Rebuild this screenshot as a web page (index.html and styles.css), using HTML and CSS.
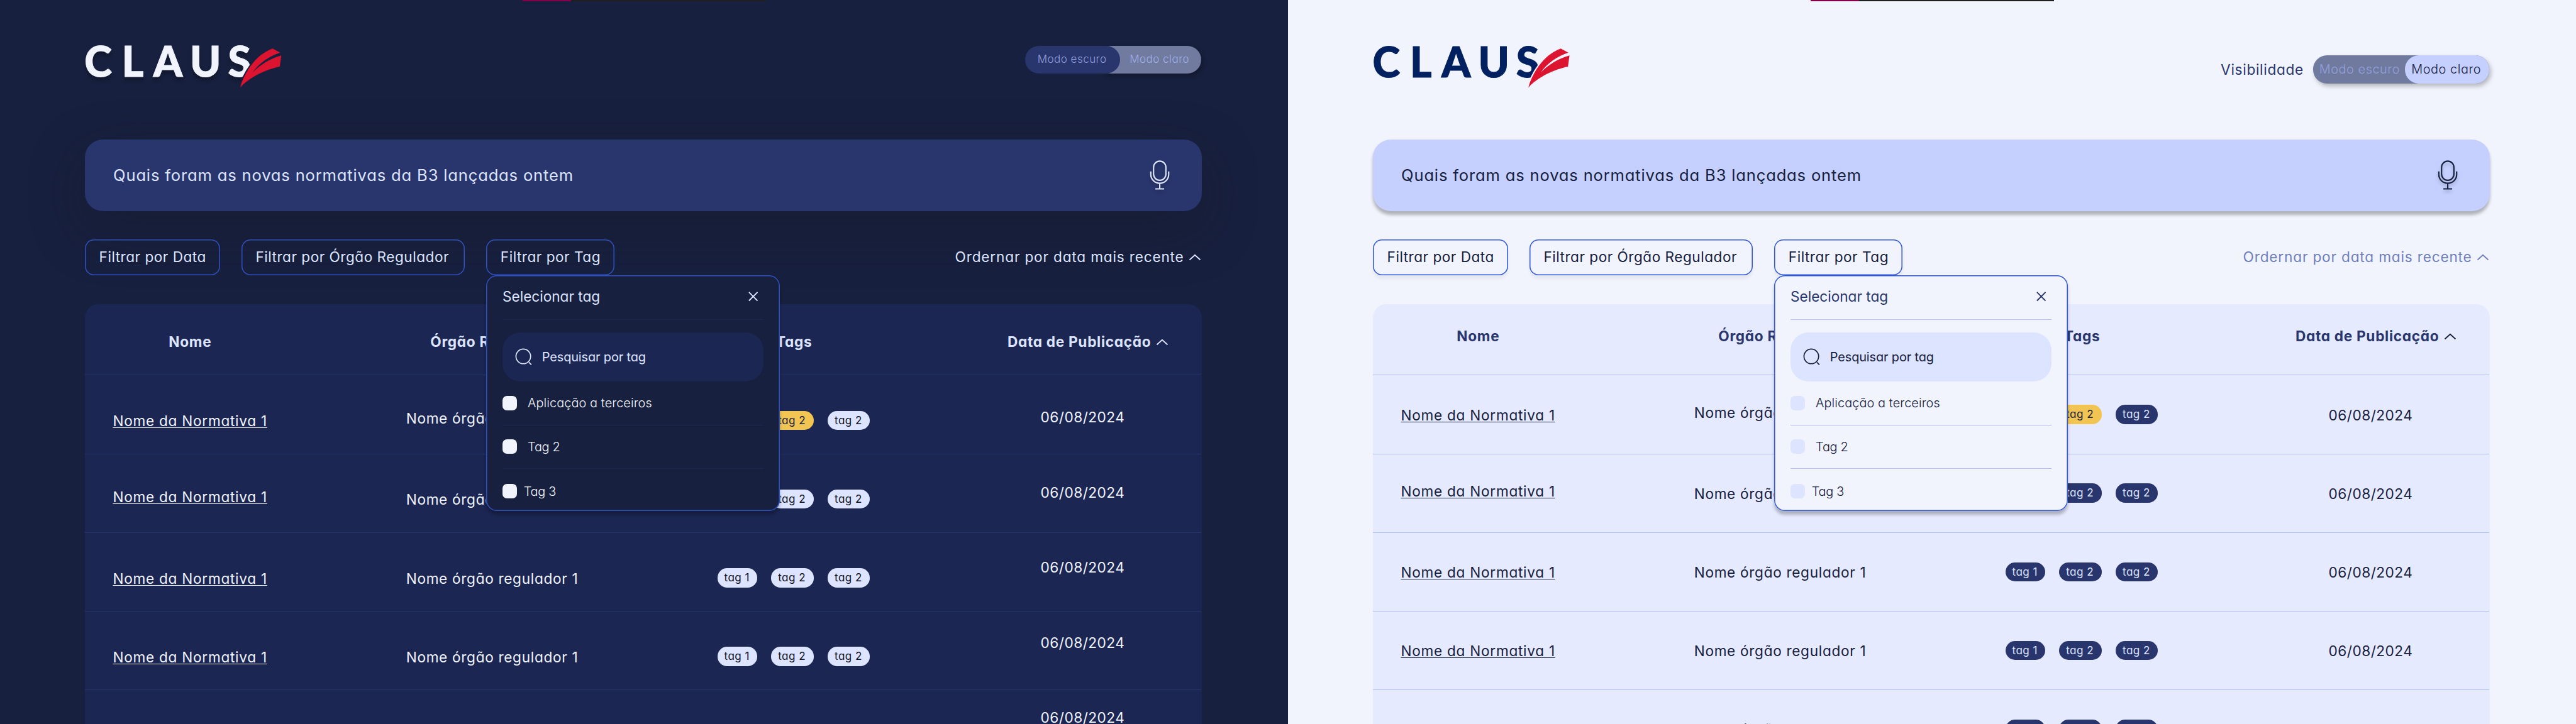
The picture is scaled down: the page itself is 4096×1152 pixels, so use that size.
FILE: index.html
```html
<!DOCTYPE html>
<html lang="pt-BR">
<head>
<meta charset="utf-8">
<title>CLAUS</title>
<link rel="stylesheet" href="styles.css">
</head>
<body>
<svg class="defs" aria-hidden="true">
  <symbol id="mic" viewBox="0 0 23 34">
    <g fill="none" stroke="currentColor" stroke-width="1.5">
      <rect x="4.4" y="1" width="13.8" height="21.4" rx="6.9"/>
      <path d="M1.3 12.4v3.4a10 10 0 0 0 20 0v-3.4M11.3 25.6v6.4M6.4 32h9.8"/>
    </g>
  </symbol>
  <symbol id="chevron" viewBox="0 0 14 8">
    <path d="M1 6.7L7 1.2l6 5.5" fill="none" stroke="currentColor" stroke-width="1.3"/>
  </symbol>
  <symbol id="close" viewBox="0 0 11 11">
    <path d="M.6.6l9.6 9.6M10.2.6L.6 10.2" fill="none" stroke="currentColor" stroke-width="1.3"/>
  </symbol>
  <symbol id="search" viewBox="0 0 20 20">
    <circle cx="9.2" cy="9.2" r="8.2" fill="none" stroke="currentColor" stroke-width="1.2"/>
    <path d="M15.4 15.8l2.8 2.8" fill="none" stroke="currentColor" stroke-width="1.2"/>
  </symbol>
  <symbol id="feather" viewBox="264 50 54 52">
    <path d="M268.4 98.2C272 84 284 62 304.5 54.5L313 59C300 63.5 289 71 282.4 81.2C291 72.5 302 65.5 314.3 62.3L312.6 74.8C298 77.5 278 87 268.4 98.2Z"/>
  </symbol>
</svg>

<main class="screens">
  <section class="screen dark">
    <div class="progress"><i></i></div>
    <header class="top">
      <svg class="logo" viewBox="94 48 224 54">
        <g class="logo-word"><text y="86.2" x="94.1 136 171.2 212.2 254.6">CLAUS</text></g>
        <use class="feather" href="#feather" x="264" y="50" width="54" height="52"/>
      </svg>
      <div class="visibility">
        <div class="toggle"><span class="on">Modo escuro</span><span class="off">Modo claro</span></div>
      </div>
    </header>

    <div class="query"><span>Quais foram as novas normativas da B3 lançadas ontem</span><svg class="mic"><use href="#mic"/></svg></div>

    <div class="filters">
      <button class="filter by-date">Filtrar por Data</button>
      <button class="filter by-organ">Filtrar por Órgão Regulador</button>
      <div class="filter-menu">
        <button class="filter by-tag">Filtrar por Tag</button>
        <div class="menu">
          <div class="menu-head"><span>Selecionar tag</span><svg class="close"><use href="#close"/></svg></div>
          <div class="menu-search"><svg class="lens"><use href="#search"/></svg><span>Pesquisar por tag</span></div>
          <label class="option"><i class="box"></i><span>Aplicação a terceiros</span></label>
          <label class="option short"><i class="box"></i><span>Tag 2</span></label>
          <label class="option short last"><i class="box"></i><span>Tag 3</span></label>
        </div>
      </div>
      <div class="sort"><span>Ordernar por data mais recente</span><svg class="chevron"><use href="#chevron"/></svg></div>
    </div>

    <div class="table">
      <div class="row head"><b class="h-name">Nome</b><b class="h-organ">Órgão Regulador</b><b class="h-tags">Tags</b><b class="h-date">Data de Publicação<svg class="chevron"><use href="#chevron"/></svg></b></div>
      <div class="row r1"><a>Nome da Normativa 1</a><span class="organ">Nome órgão regulador 1</span><div class="tags"><i>tag 1</i><i class="hot">tag 2</i><i>tag 2</i></div><time>06/08/2024</time></div>
      <div class="row r2"><a>Nome da Normativa 1</a><span class="organ">Nome órgão regulador 1</span><div class="tags"><i>tag 1</i><i>tag 2</i><i>tag 2</i></div><time>06/08/2024</time></div>
      <div class="row r3"><a>Nome da Normativa 1</a><span class="organ">Nome órgão regulador 1</span><div class="tags"><i>tag 1</i><i>tag 2</i><i>tag 2</i></div><time>06/08/2024</time></div>
      <div class="row r4"><a>Nome da Normativa 1</a><span class="organ">Nome órgão regulador 1</span><div class="tags"><i>tag 1</i><i>tag 2</i><i>tag 2</i></div><time>06/08/2024</time></div>
      <div class="row r5"><span></span><span></span><span></span><time>06/08/2024</time></div>
    </div>
  </section>

  <section class="screen light">
    <div class="progress"><i></i></div>
    <header class="top">
      <svg class="logo" viewBox="94 48 224 54">
        <g class="logo-word"><text y="86.4" x="94.3 136.2 171.4 212.4 254.8">CLAUS</text></g>
        <use class="feather" href="#feather" x="264.2" y="50" width="54" height="52"/>
      </svg>
      <div class="visibility">
        <span class="caption">Visibilidade</span>
        <div class="toggle"><span class="off">Modo escuro</span><span class="on">Modo claro</span></div>
      </div>
    </header>

    <div class="query"><span>Quais foram as novas normativas da B3 lançadas ontem</span><svg class="mic"><use href="#mic"/></svg></div>

    <div class="filters">
      <button class="filter by-date">Filtrar por Data</button>
      <button class="filter by-organ">Filtrar por Órgão Regulador</button>
      <div class="filter-menu">
        <button class="filter by-tag">Filtrar por Tag</button>
        <div class="menu">
          <div class="menu-head"><span>Selecionar tag</span><svg class="close"><use href="#close"/></svg></div>
          <div class="menu-search"><svg class="lens"><use href="#search"/></svg><span>Pesquisar por tag</span></div>
          <label class="option"><i class="box"></i><span>Aplicação a terceiros</span></label>
          <label class="option short"><i class="box"></i><span>Tag 2</span></label>
          <label class="option short last"><i class="box"></i><span>Tag 3</span></label>
        </div>
      </div>
      <div class="sort"><span>Ordernar por data mais recente</span><svg class="chevron"><use href="#chevron"/></svg></div>
    </div>

    <div class="table">
      <div class="row head"><b class="h-name">Nome</b><b class="h-organ">Órgão Regulador</b><b class="h-tags">Tags</b><b class="h-date">Data de Publicação<svg class="chevron"><use href="#chevron"/></svg></b></div>
      <div class="row r1"><a>Nome da Normativa 1</a><span class="organ">Nome órgão regulador 1</span><div class="tags"><i>tag 1</i><i class="hot">tag 2</i><i>tag 2</i></div><time>06/08/2024</time></div>
      <div class="row r2"><a>Nome da Normativa 1</a><span class="organ">Nome órgão regulador 1</span><div class="tags"><i>tag 1</i><i>tag 2</i><i>tag 2</i></div><time>06/08/2024</time></div>
      <div class="row r3"><a>Nome da Normativa 1</a><span class="organ">Nome órgão regulador 1</span><div class="tags"><i>tag 1</i><i>tag 2</i><i>tag 2</i></div><time>06/08/2024</time></div>
      <div class="row r4"><a>Nome da Normativa 1</a><span class="organ">Nome órgão regulador 1</span><div class="tags"><i>tag 1</i><i>tag 2</i><i>tag 2</i></div><time>06/08/2024</time></div>
      <div class="row r5"><span></span><span class="organ">Nome órgão regulador 1</span><div class="tags"><i></i><i></i><i></i></div><time>06/08/2024</time></div>
    </div>
  </section>
</main>
</body>
</html>
```
FILE: styles.css
```css
/* 1rem = 10 design pixels of the 1440 x 810 screens */
html { font-size: 14.2222px; }
* { box-sizing: border-box; }
body {
  margin: 0;
  font-family: Inter, "Noto Sans", sans-serif;
  font-feature-settings: "cv11";
  overflow: hidden;
}
.defs { position: absolute; width: 0; height: 0; }
svg { flex: none; display: block; }

.screens { display: grid; grid-template-columns: 1fr 1fr; height: 1152px; }
.screen {
  display: flex;
  flex-direction: column;
  height: 1152px;
  overflow: hidden;
  padding: 0 9.6rem 0 9.5rem;
  background: var(--bg);
  color: var(--text);
  font-size: 1.59rem;
  line-height: 2.4rem;
}
.dark {
  --bg: #17203e; --text: #dde4ff; --body: #f1f4fd; --strong: #dde4ff;
  --query: #29366d; --table: #1c2653; --line: #29366d; --rule: #1c2653;
  --field: #1c2653; --box: #f1f4fd; --sort: #dde4ff; --stroke: #3050bd;
  --tag: #dde4ff; --tag-text: #10131f; --logo: #f1f4fd;
}
.light {
  --bg: #f1f4fd; --text: #17203e; --body: #17203e; --strong: #29366d;
  --query: #c5d0ff; --table: #e5eaff; --line: #aebff8; --rule: #aebff8;
  --field: #dde4ff; --box: #dde4ff; --sort: #7080bb; --stroke: #3358d6;
  --tag: #29366d; --tag-text: #dde4ff; --logo: #00205f;
}

/* page loading strip */
.progress { flex: none; width: 27.2rem; height: 2px; margin-left: 48.93rem; background: #1f1f1f; }
.progress i { display: block; width: 5.4rem; height: 2px; background: #85004b; }

.top { display: flex; flex: none; justify-content: space-between; height: calc(15.6rem - 2px); }
.logo { width: 22.4rem; height: 5.4rem; margin: calc(4.8rem - 2px) 0 0 -.1rem; overflow: visible; }
.logo-word { font: 900 46.6px Lato, sans-serif; fill: var(--logo); stroke: var(--logo); stroke-width: .7px; }
.feather { fill: #dd1430; stroke: var(--bg); stroke-width: 3px; paint-order: stroke; overflow: visible; }
.dark .logo-word { filter: drop-shadow(0 4px 2px rgba(0, 0, 0, .25)); }

.visibility { display: flex; align-items: flex-start; padding-top: 5rem; margin-right: .1rem; }
.light .visibility { padding-top: 6.08rem; }
.caption { color: var(--strong); letter-spacing: .049rem; margin: .4rem 1.05rem 0 0; }
.toggle { display: flex; height: 3.1rem; width: 19.7rem; border-radius: 1.55rem; font-weight: 300; line-height: 3.1rem; white-space: nowrap; }
.dark .toggle { font-size: 1.2rem; letter-spacing: .031rem; line-height: 2.93rem; }
.light .toggle { font-size: 1.4rem; letter-spacing: .037rem; background: #70799e; box-shadow: .2rem .3rem .5rem rgba(0, 0, 0, .25); }
.dark .toggle span { color: #8f9cdb; }
.dark .on { position: relative; width: 10.6rem; padding-left: 1.4rem; border-radius: 1.55rem; background: var(--query); }
.dark .off { flex: 1; margin-left: -2.6rem; padding-left: 3.7rem; border-radius: 1.55rem; background: #717a9f; box-shadow: .2rem .3rem .5rem rgba(0, 0, 0, .25); }
.dark .toggle .off { color: #a0aee8; }
.light .off { width: 10.3rem; padding-left: .7rem; color: #93a0dc; }
.light .on { flex: 1; padding-left: .7rem; border-radius: 1.55rem; background: var(--query); }

.query {
  display: flex; align-items: center; justify-content: space-between; flex: none;
  height: 8.02rem; padding: 0 3.6rem 0 3.16rem; border-radius: 2rem;
  background: var(--query); font-size: 1.8rem; letter-spacing: .058rem; line-height: 2.8rem;
}
.dark .query { box-shadow: 0 2rem 6rem rgba(24, 24, 40, .4); }
.light .query { box-shadow: 0 .4rem .4rem rgba(0, 0, 0, .27); }
.mic { width: 2.3rem; height: 3.4rem; filter: drop-shadow(0 .3rem .2rem rgba(0, 0, 0, .2)); }

.filters { display: flex; flex: none; height: 4.03rem; margin-top: 3.16rem; position: relative; z-index: 2; }
.filter {
  display: block; height: 4.03rem; margin: 0 2.4rem 0 0; padding: 0 0 0 1.58rem; border: 0;
  border-radius: 1rem; background: none; box-shadow: inset 0 0 0 .11rem var(--stroke);
  color: var(--text); font: inherit; font-feature-settings: inherit; letter-spacing: .035rem; text-align: left; white-space: nowrap;
}
.light .filter { box-shadow: inset 0 0 0 .11rem var(--stroke), 0 .4rem .4rem rgba(0, 0, 0, .05); }
.by-date { width: 15.1rem; }
.by-organ { width: 24.98rem; }
.by-tag { width: 14.3rem; margin: 0; }
.filter-menu { position: relative; }
.sort { display: flex; align-items: center; gap: .55rem; margin-left: auto; margin-right: .08rem; color: var(--sort); letter-spacing: .058rem; }
.chevron { width: 1.4rem; height: .8rem; }

.menu {
  position: absolute; left: 0; top: 4.03rem; width: 32.78rem; height: 26.38rem; padding: 0 1.8rem;
  border-radius: 1.2rem; background: var(--bg); overflow: hidden;
  box-shadow: inset 0 0 0 .11rem var(--stroke), 0 .4rem .4rem rgba(0, 0, 0, .25);
}
.menu-head { display: flex; justify-content: space-between; height: 4.98rem; padding: 1.2rem .6rem 0 0; border-bottom: 1px solid var(--rule); color: var(--strong); }
.close { width: 1.1rem; height: 1.1rem; margin-top: .65rem; }
.menu-search { display: flex; align-items: center; gap: 1.02rem; height: 5.48rem; margin-top: 1.4rem; padding-left: 1.4rem; border-radius: 2rem; background: var(--field); font-size: 1.4rem; letter-spacing: -.009rem; }
.lens { width: 2rem; height: 2rem; }
.option { display: flex; align-items: center; gap: 1.2rem; height: 4.9rem; border-bottom: 1px solid var(--rule); color: var(--body); font-size: 1.4rem; font-weight: 300; letter-spacing: .005rem; }
.option.short { letter-spacing: -.02rem; }
.option.last { gap: .75rem; border: 0; height: 5rem; }
.box { width: 1.62rem; height: 1.62rem; border-radius: .5rem; background: var(--box); }

.table { flex: none; margin-top: 3.2rem; border-radius: 1.5rem 1.5rem 0 0; background: var(--table); color: var(--body); }
.row {
  display: grid; grid-template-columns: 32.78rem 34.82rem 36.12rem 1fr;
  align-items: start; height: 8.8rem; padding-left: 3.12rem; margin-right: .1rem; border-bottom: 1px solid var(--line); white-space: nowrap;
}
.row.head { height: 8rem; padding-top: 3.08rem; color: var(--strong); letter-spacing: .05rem; }
.light .row.head { padding-top: 2.43rem; }
.h-name { padding-left: 6.25rem; }
.h-organ { padding-left: 2.72rem; }
.h-tags { padding-left: 6.55rem; }
.h-date { display: flex; align-items: center; gap: .55rem; margin-left: -3.7rem; }
.h-date .chevron { color: var(--text); }
.row.r5 { border: 0; }
.row a { letter-spacing: .051rem; text-decoration: underline; text-decoration-thickness: 1px; text-underline-offset: .17rem; }
.organ { letter-spacing: .048rem; }
.row time { letter-spacing: .034rem; }
.tags { display: flex; gap: 1.6rem; }
.tags i {
  width: 4.72rem; height: 2.13rem; padding-left: .75rem; border-radius: 1.06rem; background: var(--tag); color: var(--tag-text);
  font-size: 1.2rem; font-style: normal; letter-spacing: .035rem; line-height: 2.13rem;
}
.tags i:first-child { width: 4.42rem; }
.tags .hot { background: #f2c553; color: #17203e; }

/* each column of the dark table keeps its own vertical rhythm */
.dark .row > * { margin-top: 3.93rem; }
.dark .row .tags { margin-top: 3.98rem; }
.dark .r1 .organ { margin-top: 3.6rem; }
.dark .r2 a { margin-top: 3.63rem; }
.dark .r1 time { margin-top: 3.52rem; }
.dark .r2 time { margin-top: 3.1rem; }
.dark .r3 time { margin-top: 2.72rem; }
.dark .r4 time { margin-top: 2.33rem; }
.dark .r5 time { margin-top: 1.92rem; }
.light .row > * { margin-top: 3.25rem; }
.light .row .tags { margin-top: 3.3rem; }
.light .r1 .organ, .light .r2 a { margin-top: 2.96rem; }
.dark .row.head > *, .light .row.head > * { margin-top: 0; }
```
